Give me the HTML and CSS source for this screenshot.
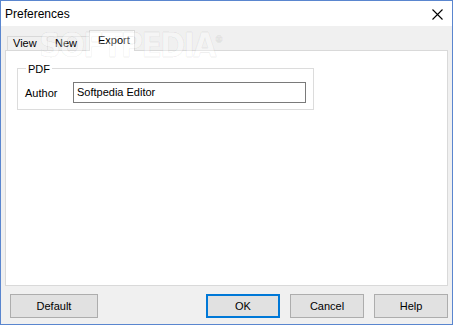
FILE: index.html
```html
<!DOCTYPE html>
<html>
<head>
<meta charset="utf-8">
<link rel="stylesheet" href="styles.css">
</head>
<body>
<div class="window">
  <div class="titlebar">
    <span class="title">Preferences</span>
    <svg class="close" width="11" height="11" viewBox="0 0 11 11"><path d="M0.5 0.5 L10.5 10.5 M10.5 0.5 L0.5 10.5" stroke="#000" stroke-width="1.1" fill="none"/></svg>
  </div>
  <div class="body">
    <div class="tabs">
      <div class="tab tab-view">View</div>
      <div class="tab tab-new">New</div>
      <div class="tab tab-export active">Export</div>
    </div>
    <div class="panel">
      <fieldset class="group">
        <legend class="legend">PDF</legend>
        <div class="row">
          <label class="label">Author</label>
          <div class="input">Softpedia Editor</div>
        </div>
      </fieldset>
    </div>
    <div class="footer">
      <button class="btn btn-wide">Default</button>
      <div class="spacer"></div>
      <button class="btn btn-default">OK</button>
      <button class="btn">Cancel</button>
      <button class="btn">Help</button>
    </div>
  </div>
  <div class="watermark">SOFTPEDIA<sup class="reg">®</sup></div>
</div>
</body>
</html>
```
FILE: styles.css
```css
* { box-sizing: border-box; }
html, body { margin: 0; padding: 0; background: #f0f0f0; }
body { font-family: "Liberation Sans", Arial, sans-serif; font-size: 11px; color: #000; }
.window {
  position: relative;
  width: 453px; height: 325px;
  border: 1px solid #5a86cf;
  background: #f0f0f0;
  display: flex; flex-direction: column;
  overflow: hidden;
}
.titlebar {
  height: 25px; background: #fff;
  display: flex; align-items: center; justify-content: space-between;
  padding: 0 9px 0 4px;
}
.title { font-size: 12px; }
.close { margin-top: 1px; }
.body { flex: 1; display: flex; flex-direction: column; padding: 4px 4px 0 4px; }
.tabs {
  display: flex; align-items: flex-end; height: 21px;
  padding-left: 2px; position: relative; z-index: 1; margin-bottom: -1px;
}
.tab {
  height: 14px; line-height: 13px;
  border: 1px solid #d9d9d9; border-bottom: none;
  background: #f0f0f0;
  margin-bottom: 1px;
  white-space: nowrap;
}
.tab-view { width: 41px; padding-left: 5px; }
.tab-new { width: 43px; padding-left: 7px; margin-left: -1px; border-left-color: #e3e3e3; }
.tab-export { width: 46px; padding-left: 8px; margin-left: -1px; }
.tab.active {
  height: 21px; background: #fff; padding-top: 3px;
  margin-bottom: 0;
}
.panel {
  height: 236px; background: #fff; border: 1px solid #d9d9d9;
  padding: 9px 0 0 11px;
}
.group {
  width: 297px; margin: 0; padding: 6px 7px 6px 7px;
  border: 1px solid #dcdcdc;
}
.legend { padding: 3px 2px 0 2px; margin-left: 1px; line-height: 13px; }
.row { display: flex; align-items: center; }
.label { width: 48px; }
.input {
  width: 233px; height: 21px; border: 1px solid #7a7a7a;
  padding-left: 3px; line-height: 19px; background: #fff;
}
.footer { display: flex; align-items: center; padding: 8px 0 0 5px; }
.spacer { flex: 1; }
.btn {
  font-family: inherit; font-size: 11px; color: #000;
  height: 24px; width: 74px;
  background: #e1e1e1; border: 1px solid #adadad;
  margin: 0 0 0 10px; padding: 0;
}
.btn:first-child { margin-left: 0; }
.btn-wide { width: 88px; }
.btn-default { border: 2px solid #0078d7; }
.watermark {
  position: absolute; left: 38px; top: 26px;
  font-family: "DejaVu Sans Condensed", "DejaVu Sans", sans-serif;
  font-weight: bold; font-size: 34px; letter-spacing: -2px; line-height: 26px;
  color: rgba(255,255,255,0.35);
  -webkit-text-stroke: 1px rgba(0,0,0,0.06);
  pointer-events: none; z-index: 5;
}
.reg { font-size: 10px; vertical-align: 14px; letter-spacing: 0; }
```
